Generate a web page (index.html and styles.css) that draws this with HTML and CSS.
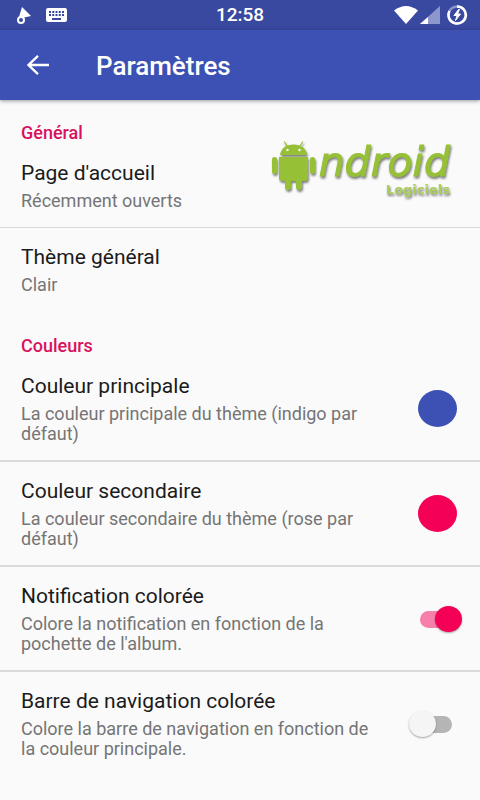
FILE: index.html
```html
<!DOCTYPE html>
<html lang="fr">
<head>
<meta charset="utf-8">
<meta name="viewport" content="width=device-width, initial-scale=1">
<title>Paramètres</title>
<link rel="stylesheet" href="styles.css">
</head>
<body>
<div class="status">
  <div class="status-icons">
    <svg width="16" height="18" viewBox="0 0 16 18" aria-hidden="true"><path d="M6 1 15 10 6 12 3 11Z" fill="#fff"/><circle cx="5" cy="14" r="3" fill="#3949a0" stroke="#fff" stroke-width="2"/></svg>
    <svg class="keyboard" width="22" height="16" viewBox="0 0 22 16" aria-hidden="true"><rect x="0" y="1" width="21" height="14" rx="2" fill="#fff"/><path d="M3 5h15M3 8h15" stroke="#3949a0" stroke-width="2" stroke-dasharray="2 1.25"/><path d="M6 12h9" stroke="#3949a0" stroke-width="2"/></svg>
  </div>
  <time class="clock">12:58</time>
  <div class="status-icons status-end">
    <svg width="24" height="18" viewBox="0 0 24 18" aria-hidden="true"><path d="M0 4.500Q12-4.500 24 4.500L12 18Z" fill="#fff"/></svg>
    <svg class="signal" width="20" height="18" viewBox="0 0 20 18" aria-hidden="true"><path d="M20 0V18H0Z" fill="#8d97cc"/><path d="M8 11V18H0Z" fill="#fff"/></svg>
    <svg class="battery" width="22" height="20" viewBox="0 0 22 20" aria-hidden="true"><circle cx="11" cy="10" r="8.500" fill="none" stroke="#8d97cc" stroke-width="2.500"/><path d="M11 1.500A8.700 8.500 0 1 1 3.500 6" fill="none" stroke="#fff" stroke-width="2.500"/><path d="M12.500 4.500 8 10.500h3L9.500 15.500l5-6.500h-3L13.500 4.500Z" fill="#fff" stroke="#fff"/></svg>
  </div>
</div>
<header class="appbar">
  <button class="back" type="button" aria-label="Retour">
    <svg width="22" height="20" viewBox="0 0 22 20" aria-hidden="true"><path d="M11 .8 1.500 10l9.500 9.200M1.500 10H22" fill="none" stroke="#fff" stroke-width="2.300"/></svg>
  </button>
  <h1>Paramètres</h1>
</header>
<main>
  <div class="logo">
    <svg class="robot" width="46" height="52" viewBox="0 0 46 52" aria-hidden="true">
      <g fill="#96c136"><path d="M9 15C10 8 15 4.500 22.500 4.500S35 8 36 15Z"/><path d="M8 17H37V38Q37 41 34 41H11Q8 41 8 38Z"/><rect x="1" y="17" width="5" height="17" rx="2.500"/><rect x="39" y="17" width="5" height="17" rx="2.500"/><rect x="14" y="36" width="6" height="14" rx="3"/><rect x="25" y="36" width="6" height="14" rx="3"/></g>
      <path d="M16 6 13.500 2M29 6l2.500-4" stroke="#96c136" stroke-width="1.200" stroke-linecap="round"/><circle cx="16.500" cy="10" r="1.200" fill="#fff"/><circle cx="28.500" cy="10" r="1.200" fill="#fff"/>
    </svg>
    <div class="wordmark"><span class="word">ndroid</span><span class="subword">Logiciels</span></div>
  </div>
  <section>
    <h2>Général</h2>
    <button class="row row-first" type="button"><span class="text"><span class="title">Page d'accueil</span><span class="summary">Récemment ouverts</span></span></button>
    <button class="row" type="button"><span class="text"><span class="title">Thème général</span><span class="summary">Clair</span></span></button>
  </section>
  <section>
    <h2>Couleurs</h2>
    <button class="row divided" type="button"><span class="text"><span class="title">Couleur principale</span><span class="summary">La couleur principale du thème (indigo par défaut)</span></span><span class="swatch indigo"></span></button>
    <button class="row divided" type="button"><span class="text"><span class="title">Couleur secondaire</span><span class="summary">La couleur secondaire du thème (rose par défaut)</span></span><span class="swatch rose"></span></button>
    <label class="row divided" for="notification"><span class="text"><span class="title">Notification colorée</span><span class="summary">Colore la notification en fonction de la pochette de l'album.</span></span><input class="switch" id="notification" type="checkbox" checked></label>
    <label class="row" for="navigation"><span class="text"><span class="title">Barre de navigation colorée</span><span class="summary">Colore la barre de navigation en fonction de la couleur principale.</span></span><input class="switch" id="navigation" type="checkbox"></label>
  </section>
</main>
</body>
</html>
```
FILE: styles.css
```css
* { box-sizing: border-box; }
body {
  margin: 0;
  min-height: 100vh;
  background: #fafafa;
  color: #1b1b1b;
  font-family: Roboto, "Liberation Sans", sans-serif;
}
button { border: 0; background: none; font: inherit; color: inherit; text-align: left; }
svg { display: block; flex: none; }

.status {
  display: grid;
  grid-template-columns: 1fr auto 1fr;
  align-items: center;
  height: 30px;
  padding: 0 12px 0 16px;
  background: #3949a0;
  color: #fff;
}
.status-icons { display: flex; align-items: center; }
.status-end { justify-content: flex-end; }
.keyboard { margin-left: 14px; }
.signal { margin-left: 2px; }
.battery { margin-left: 6px; }
.clock { padding-right: 4px; font-size: 19px; font-weight: 500; line-height: 30px; }

.appbar {
  display: flex;
  align-items: center;
  height: 70px;
  padding-left: 16px;
  background: #3d50b3;
  color: #fff;
  box-shadow: 0 1px 4px rgba(0, 0, 0, .4);
}
.back { display: grid; place-items: center; width: 44px; height: 44px; padding: 0; }
h1 { margin: 2px 0 0 36px; font-size: 26px; font-weight: 500; line-height: 32px; }

main { position: relative; }
h2 {
  margin: 0;
  padding: 22px 21px 0;
  font-size: 18px;
  font-weight: 500;
  line-height: 22px;
  color: #d8125e;
}
section + section { padding-top: 2px; }
.row {
  display: flex;
  align-items: center;
  justify-content: space-between;
  width: 100%;
  padding: 16px 18px 16px 21px;
}
.row-first { border-bottom: 1px solid #d8d8d8; }
.divided { border-bottom: 2px solid #dadada; }
.text { flex: 0 1 362px; display: flex; flex-direction: column; gap: 5px; }
.title { font-size: 21px; line-height: 26px; }
.summary { font-size: 18px; line-height: 20px; color: #757575; }

.swatch { flex: none; width: 39px; height: 37px; margin-right: 5px; border-radius: 50%; }
.indigo { background: #3d50b3; }
.rose { background: #f50057; }

.switch {
  appearance: none;
  position: relative;
  flex: none;
  width: 53px;
  height: 26px;
  margin: 0;
}
.switch::before {
  content: "";
  position: absolute;
  inset: 5px 10px 4px 11px;
  border-radius: 9px;
  background: #b5b5b5;
}
.switch::after {
  content: "";
  position: absolute;
  top: 0;
  left: 0;
  width: 27px;
  height: 26px;
  border-radius: 50%;
  background: #f5f5f5;
  box-shadow: 0 1px 2px rgba(0, 0, 0, .35);
}
.switch:checked::before { background: #f77fab; }
.switch:checked::after { left: auto; right: 0; background: #f50057; }

.logo {
  position: absolute;
  top: 40px;
  right: 30px;
  display: flex;
  gap: 2px;
  color: #96c136;
  filter: drop-shadow(1px 2px 1px rgba(0, 0, 0, .5));
}
.wordmark { display: flex; flex-direction: column; align-items: flex-end; }
.word { font: italic 41px/44px "DejaVu Sans", sans-serif; -webkit-text-stroke: 1px #96c136; }
.subword { font: 700 13px/12px "DejaVu Sans", sans-serif; color: #a9cf5a; }
```
